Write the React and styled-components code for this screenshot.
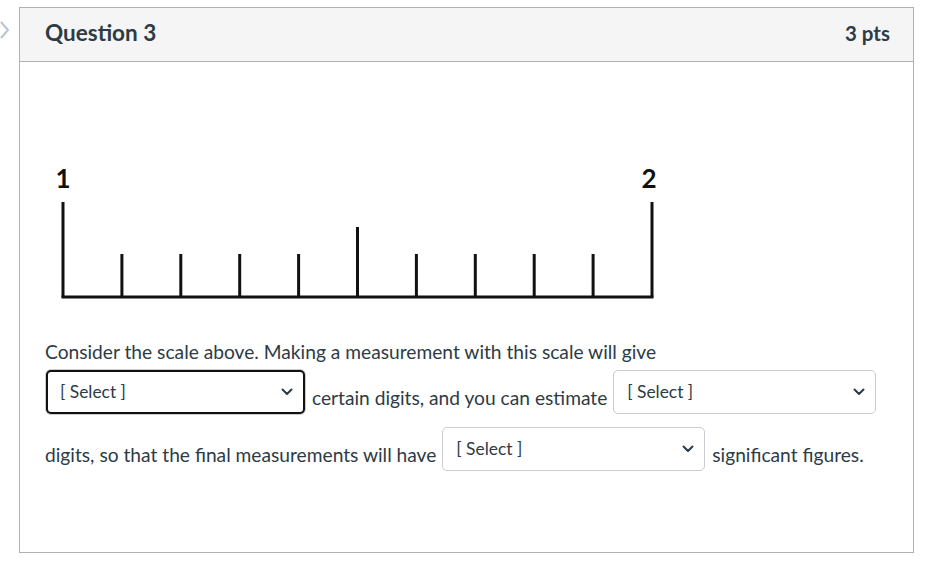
import React from 'react';
import styled, { createGlobalStyle } from 'styled-components';

const GlobalStyle = createGlobalStyle`
  html, body { margin: 0; padding: 0; background: #fff; }
  body { font-family: Lato, "Noto Sans", "Liberation Sans", sans-serif; color: #2d3b45; }
`;

const Page = styled.div`
  display: flex;
  align-items: flex-start;
  padding-top: 7px;
`;

const Rail = styled.div`
  width: 19px;
  padding-top: 14px;
  svg { display: block; }
`;

const Card = styled.div`
  width: 893px;
  height: 544px;
  border: 1px solid #aeb2b5;
  display: flex;
  flex-direction: column;
`;

const Header = styled.div`
  height: 54px;
  box-sizing: border-box;
  flex: none;
  background: #f5f5f5;
  border-bottom: 1px solid #aeb2b5;
  display: flex;
  align-items: center;
  justify-content: space-between;
  padding: 0 23px 4px 25px;
`;

const Title = styled.h3`
  margin: 0;
  font-size: 22.5px;
  font-weight: 700;
  color: #2d3b45;
`;

const Points = styled.span`
  font-size: 20.5px;
  font-weight: 700;
  color: #2d3b45;
`;

const Body = styled.div`
  padding: 96px 25px 0 25px;
`;

const Ruler = styled.svg`
  display: block;
  width: 620px;
  height: 146px;
`;

const Prompt = styled.p`
  margin: 34px 0 0;
  font-size: 19.2px;
  line-height: 1.5;
  color: #2d3b45;
`;

const SelectBox = styled.span`
  display: inline-flex;
  align-items: center;
  justify-content: space-between;
  box-sizing: border-box;
  width: ${p => (p.$focused ? 259 : 263)}px;
  height: 44px;
  margin: 3px 2px 10px 1px;
  padding: 0 10px 0 ${p => (p.$focused ? 12 : 13)}px;
  vertical-align: 7px;
  border: ${p => (p.$focused ? '2px solid #111' : '1px solid #c7cdd1')};
  border-radius: 5px;
  box-shadow: ${p => (p.$focused ? '0 0 0 1px #c7cdd1' : 'none')};
  background: #fff;
  font-size: 17.4px;
  color: #2d3b45;
  cursor: pointer;
`;

const Chevron = () => (
  <svg width="12" height="8" viewBox="0 0 12 8">
    <polyline points="1.5,1.5 6,6 10.5,1.5" fill="none" stroke="#2d3b45" strokeWidth="2" strokeLinecap="round" strokeLinejoin="round" />
  </svg>
);

const Select = ({ focused }) => (
  <SelectBox $focused={focused}>
    <span>[ Select ]</span>
    <Chevron />
  </SelectBox>
);

// scale image: ticks from 1 to 2
const ticks = [0, 1, 2, 3, 4, 5, 6, 7, 8, 9, 10];
const RulerDrawing = () => {
  const x0 = 18;
  const step = 58.9;
  const base = 139;
  return (
    <Ruler viewBox="0 0 620 146">
      <text x={x0} y={30} textAnchor="middle" fontFamily="Lato, 'Liberation Sans', sans-serif" fontWeight="700" fontSize="26" fill="#111">1</text>
      <text x={x0 + step * 10 - 3} y={30} textAnchor="middle" fontFamily="Lato, 'Liberation Sans', sans-serif" fontWeight="700" fontSize="26" fill="#111">2</text>
      {ticks.map(i => {
        const x = x0 + step * i;
        const top = i === 0 || i === 10 ? 44 : i === 5 ? 69 : 96;
        return <line key={i} x1={x} y1={top} x2={x} y2={base} stroke="#111" strokeWidth="3" />;
      })}
      <line x1={x0 - 1.5} y1={base} x2={x0 + step * 10 + 1.5} y2={base} stroke="#111" strokeWidth="3" />
    </Ruler>
  );
};

export default function App() {
  return (
    <>
      <GlobalStyle />
      <Page>
        <Rail>
          <svg width="10" height="18" viewBox="0 0 10 18">
            <polyline points="1,1 8,9 1,17" fill="none" stroke="#b8c6d2" strokeWidth="2" />
          </svg>
        </Rail>
        <Card>
          <Header>
            <Title>Question 3</Title>
            <Points>3 pts</Points>
          </Header>
          <Body>
            <RulerDrawing />
            <Prompt>
              Consider the scale above. Making a measurement with this scale will give{' '}
              <Select focused />{' '}certain digits, and you can estimate{' '}
              <Select />{' '}digits, so that the final measurements will have{' '}
              <Select />{' '}significant figures.
            </Prompt>
          </Body>
        </Card>
      </Page>
    </>
  );
}
